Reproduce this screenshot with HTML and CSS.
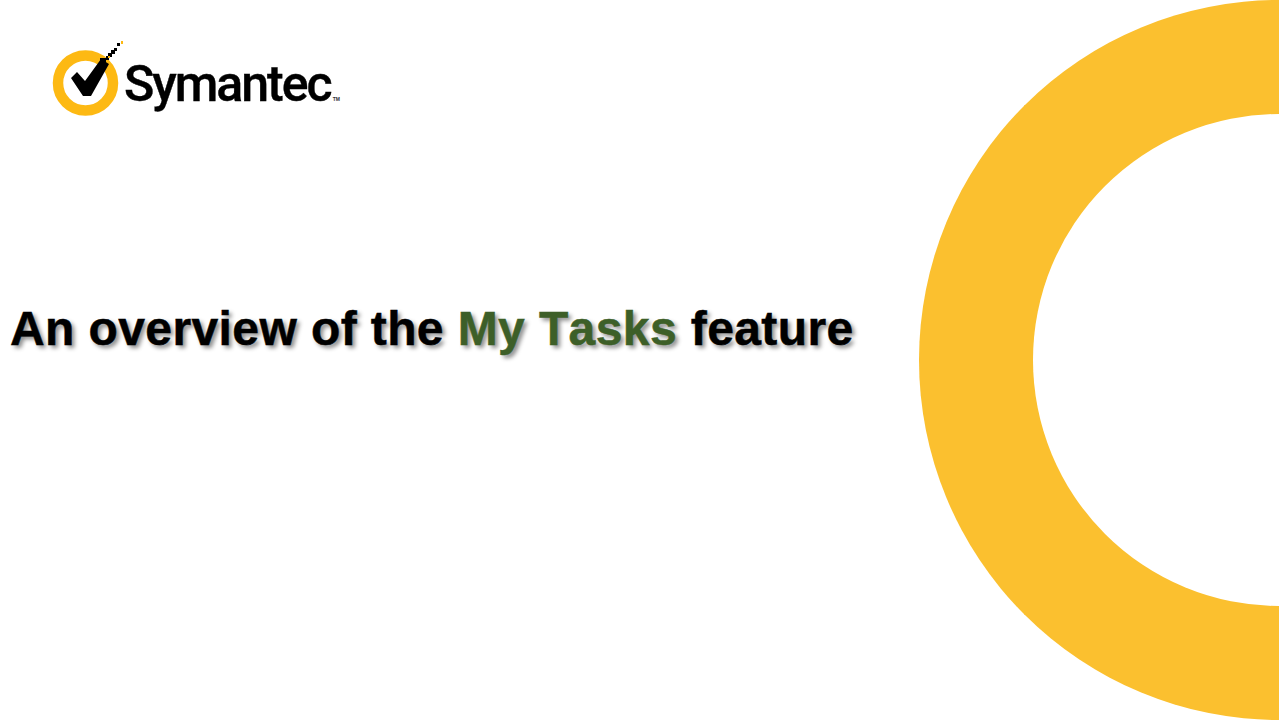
FILE: index.html
```html
<!DOCTYPE html>
<html>
<head>
  <title>An overview of the My Tasks feature</title>
  <link rel="stylesheet" href="styles.css">
</head>
<body>
  <div class="ring"></div>
  <div class="logo">
    <svg class="logo-mark" width="72" height="76" viewBox="52 40 72 76">
      <circle cx="85.5" cy="83" r="27.5" fill="none" stroke="#fdb913" stroke-width="10.5"/>
      <path d="M71 78 L77 72 L85 81 L101 59 L109 64 L91 96 L83 96 Z" fill="#000"/>
      <path d="M100 58h6v-2h2v-3h3v-3h3v-2h3v3h-2v3h-3v3h-3v3h-3v3h-6z M117 43h3v3h-3z" fill="#000"/>
      <path d="M121 41h2v3h-2z M108 56h2v2h-2z" fill="#fdb913"/>
    </svg>
    <span class="logo-name">Symantec</span><span class="logo-tm">TM</span>
  </div>
  <h1 class="title">An overview of the <span class="title-green">My Tasks</span> feature</h1>
</body>
</html>
```

FILE: styles.css
```css
body {
  margin: 0;
  height: 720px;
  overflow: hidden;
  background-color: #ffffff;
  font-family: "Liberation Sans", Arial, sans-serif;
}

/* big half ring on the right, sits behind everything */
.ring {
  position: absolute;
  top: 0;
  right: 1px;
  width: 246px;
  height: 492px;
  border: 114px solid #fbc02f;
  border-right: 0;
  border-radius: 360px 0 0 360px;
}

.logo {
  display: flex;
  align-items: flex-start;
  padding: 40px 0 0 52px;
  height: 76px;
}

.logo-name {
  margin-top: 12px;
  font-family: "Roboto", sans-serif;
  font-weight: 500;
  font-size: 50px;
  line-height: 64px;
  letter-spacing: -2px;
  -webkit-text-stroke: 0.4px;
  color: #000000;
}

.logo-tm {
  margin-top: 56px;
  margin-left: 2px;
  font-size: 5px;
  font-weight: bold;
  color: #333333;
}

.title {
  margin: 181px 0 0 10px;
  font-size: 48px;
  line-height: 64px;
  letter-spacing: 0.4px;
  font-kerning: none;
  font-weight: bold;
  color: #000000;
  white-space: nowrap;
  -webkit-text-stroke: 0.5px;
  text-shadow: 3px 3px 4px rgba(0, 0, 0, 0.45);
}

.title-green {
  color: #3d5f28;
}
```
